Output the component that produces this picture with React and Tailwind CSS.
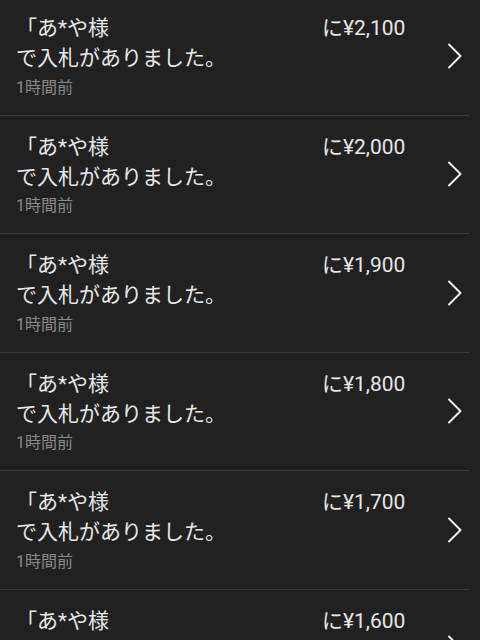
const bids = ["2,100", "2,000", "1,900", "1,800", "1,700", "1,600"];

const Chevron = () => (
  <svg width="16" height="26" viewBox="0 0 16 26" fill="none" className="shrink-0">
    <polyline
      points="2,1.5 13.5,13 2,24.5"
      stroke="#ececec"
      strokeWidth="2"
      strokeLinecap="round"
      strokeLinejoin="round"
    />
  </svg>
);

const BidRow = ({ price }) => (
  <div className="mr-[11px] border-b border-[#3a3a3a]">
    <div className="flex h-[117.5px] items-center pr-[6px]">
      <div className="flex-1 pl-4 pt-[4px]">
        <div className="flex h-[30px] items-center text-[21px] text-[#e8e8e8]">
          <span className="w-[306px]">「あ*や様</span>
          <span>に¥{price}</span>
        </div>
        <div className="flex h-[30px] items-center text-[21px] text-[#e8e8e8]">
          で入札がありました。
        </div>
        <div className="flex h-[28px] items-center text-[16px] text-[#8a8a8a]">
          1時間前
        </div>
      </div>
      <Chevron />
    </div>
  </div>
);

export default function App() {
  return (
    <div
      className="h-[640px] w-[480px] overflow-hidden bg-[#212121]"
      style={{ fontFamily: 'Roboto, "Noto Sans CJK JP", sans-serif' }}
    >
      <div className="-mt-[3px]">
        {bids.map((p) => (
          <BidRow key={p} price={p} />
        ))}
      </div>
    </div>
  );
}
